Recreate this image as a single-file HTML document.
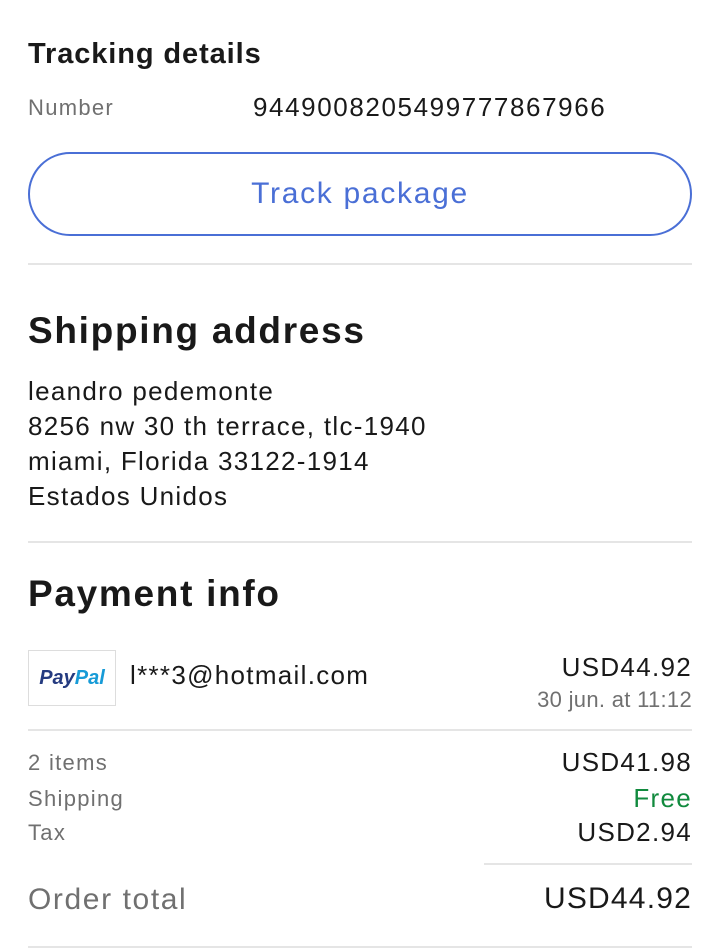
<!DOCTYPE html>
<html><head><meta charset="utf-8"><style>
body{margin:0;width:720px;height:950px;background:#fff;font-family:"Liberation Sans",sans-serif;color:#191919;position:relative;overflow:hidden;letter-spacing:1.3px}
.a{position:absolute;white-space:nowrap}
.hr{position:absolute;height:2px;background:#e5e5e5}
</style></head><body>
<div class="a" style="left:28px;top:38px;font-size:29px;font-weight:bold;letter-spacing:0.9px">Tracking details</div>
<div class="a" style="left:28px;top:95px;font-size:22px;color:#707070">Number</div>
<div class="a" style="left:253px;top:92px;font-size:26px;letter-spacing:1.6px">9449008205499777867966</div>
<div class="a" style="left:28px;top:152px;width:660px;height:80px;border:2px solid #4a6fd6;border-radius:42px;box-sizing:content-box;text-align:center;line-height:80px;font-size:30px;color:#4a6fd6;letter-spacing:1.7px">Track package</div>
<div class="hr" style="left:28px;top:263px;width:664px"></div>
<div class="a" style="left:28px;top:310px;font-size:37px;font-weight:bold;letter-spacing:1.7px">Shipping address</div>
<div class="a" style="left:28px;top:374px;font-size:26px;line-height:35px;letter-spacing:1.3px">leandro pedemonte<br>8256 nw 30 th terrace, tlc-1940<br>miami, Florida 33122-1914<br>Estados Unidos</div>
<div class="hr" style="left:28px;top:541px;width:664px"></div>
<div class="a" style="left:28px;top:573px;font-size:37px;font-weight:bold;letter-spacing:1.7px">Payment info</div>
<div class="a" style="left:28px;top:650px;width:86px;height:54px;border:1px solid #ddd;text-align:center;line-height:54px;font-size:20px;font-weight:bold;font-style:italic;letter-spacing:0"><span style="color:#253b80">Pay</span><span style="color:#179bd7">Pal</span></div>
<div class="a" style="left:130px;top:660px;font-size:26px">l***3@hotmail.com</div>
<div class="a" style="right:28px;top:652px;font-size:26px">USD44.92</div>
<div class="a" style="right:28px;top:687px;font-size:22px;color:#707070;letter-spacing:0.3px">30 jun. at 11:12</div>
<div class="hr" style="left:28px;top:729px;width:664px"></div>
<div class="a" style="left:28px;top:750px;font-size:22px;color:#707070">2 items</div>
<div class="a" style="right:28px;top:747px;font-size:26px">USD41.98</div>
<div class="a" style="left:28px;top:786px;font-size:22px;color:#707070">Shipping</div>
<div class="a" style="right:28px;top:783px;font-size:26px;color:#118a3e">Free</div>
<div class="a" style="left:28px;top:820px;font-size:22px;color:#707070">Tax</div>
<div class="a" style="right:28px;top:817px;font-size:26px">USD2.94</div>
<div class="hr" style="left:484px;top:863px;width:208px"></div>
<div class="a" style="left:28px;top:883px;font-size:30px;color:#707070;letter-spacing:1.6px">Order total</div>
<div class="a" style="right:28px;top:882px;font-size:30px;letter-spacing:1.2px">USD44.92</div>
<div class="hr" style="left:28px;top:946px;width:664px"></div>
</body></html>
